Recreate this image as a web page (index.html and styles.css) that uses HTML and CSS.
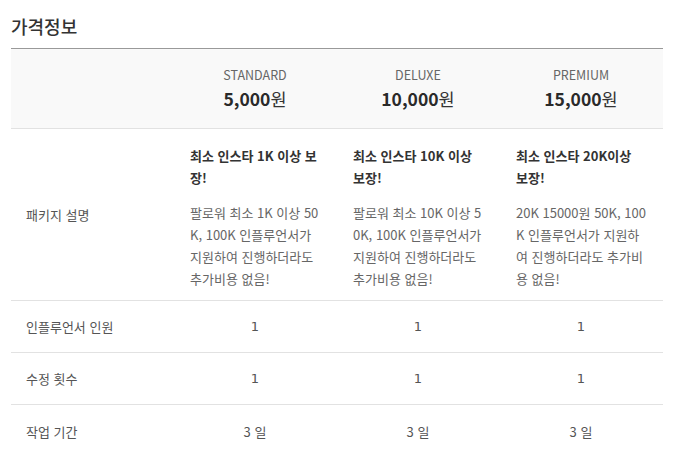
FILE: index.html
```html
<!DOCTYPE html>
<html lang="ko">
<head>
<meta charset="utf-8">
<link rel="stylesheet" href="styles.css">
</head>
<body>
<div class="wrap">
  <h2 class="title">가격정보</h2>
  <div class="table">
    <div class="row head">
      <div class="cell label"></div>
      <div class="cell plan"><div class="name">STANDARD</div><div class="price"><b>5,000</b>원</div></div>
      <div class="cell plan"><div class="name">DELUXE</div><div class="price"><b>10,000</b>원</div></div>
      <div class="cell plan"><div class="name">PREMIUM</div><div class="price"><b>15,000</b>원</div></div>
    </div>
    <div class="row desc">
      <div class="cell label">패키지 설명</div>
      <div class="cell info"><div class="dt">최소 인스타 1K 이상 보장!</div><div class="dd">팔로워 최소 1K 이상 50K, 100K 인플루언서가 지원하여 진행하더라도 추가비용 없음!</div></div>
      <div class="cell info"><div class="dt">최소 인스타 10K 이상 보장!</div><div class="dd">팔로워 최소 10K 이상 50K, 100K 인플루언서가 지원하여 진행하더라도 추가비용 없음!</div></div>
      <div class="cell info"><div class="dt">최소 인스타 20K이상 보장!</div><div class="dd">20K 15000원 50K, 100K 인플루언서가 지원하여 진행하더라도 추가비용 없음!</div></div>
    </div>
    <div class="row simple">
      <div class="cell label">인플루언서 인원</div>
      <div class="cell val num">1</div>
      <div class="cell val num">1</div>
      <div class="cell val num">1</div>
    </div>
    <div class="row simple">
      <div class="cell label">수정 횟수</div>
      <div class="cell val num">1</div>
      <div class="cell val num">1</div>
      <div class="cell val num">1</div>
    </div>
    <div class="row simple last">
      <div class="cell label">작업 기간</div>
      <div class="cell val">3 일</div>
      <div class="cell val">3 일</div>
      <div class="cell val">3 일</div>
    </div>
  </div>
</div>
</body>
</html>
```

FILE: styles.css
```css
* { box-sizing: border-box; }
html, body { margin: 0; padding: 0; background: #fff; }
body {
  font-family: "Noto Sans CJK KR", "Noto Sans", sans-serif;
  color: #333;
}
.wrap { padding: 0 10px 0 11px; }
.title {
  margin: 0 0 9px;
  padding-top: 13px;
  font-size: 18px;
  line-height: 26px;
  font-weight: 500;
  color: #333;
}
.table { border-top: 1px solid #999; }
.row {
  display: grid;
  grid-template-columns: repeat(4, 1fr);
  border-bottom: 1px solid #e2e2e2;
}
.row.last { border-bottom: none; }
.cell { padding: 0 16px 0 15px; }
.head { background: #f9f9f9; }
.head .cell { padding-top: 17px; padding-bottom: 17px; }
.plan { text-align: center; }
.name { font-size: 12.5px; line-height: 18px; color: #666; }
.price { margin-top: 3px; font-size: 17.5px; line-height: 24px; color: #333; }
.price b { font-weight: 700; color: #2a2a2a; }
.label { font-size: 13px; color: #555; display: flex; align-items: center; }
.info { padding: 16px 16px 10px 16px; }
.dt {
  margin-right: 3px;
  font-size: 13px; line-height: 22px; font-weight: 700; color: #333;
  word-break: break-all;
}
.dd {
  margin-top: 13px;
  font-size: 13px; line-height: 22px; color: #666;
  word-break: break-all;
}
.simple { height: 52px; }
.simple .cell { display: flex; align-items: center; }
.val { justify-content: center; font-size: 13px; color: #555; }
.num { font-family: "DejaVu Sans", sans-serif; font-size: 13px; }
```
